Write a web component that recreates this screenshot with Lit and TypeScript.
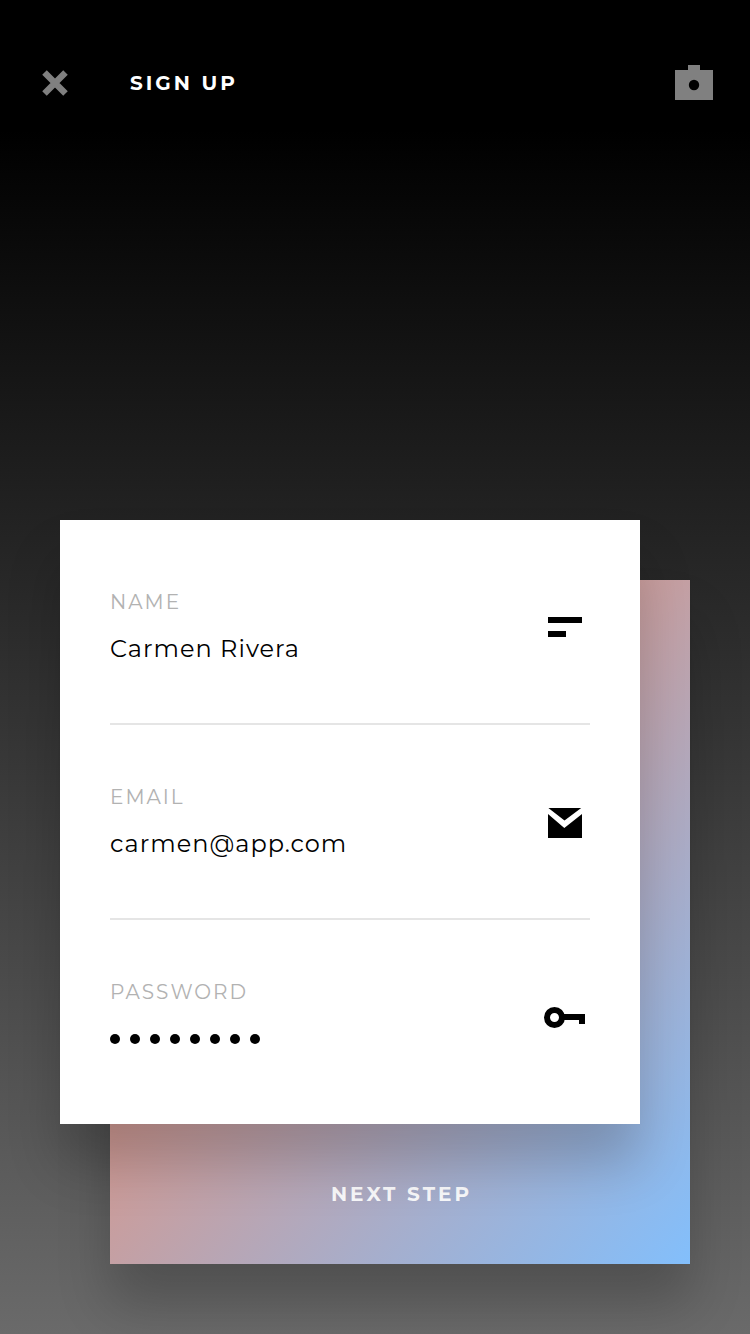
import { LitElement, html, css } from "lit";
import { customElement } from "lit/decorators.js";

const closeIcon = html`<svg width="26" height="26" viewBox="0 0 26 26">
  <path d="M2.5 2.5L23.5 23.5M23.5 2.5L2.5 23.5" stroke="#808080" stroke-width="6.4" fill="none" />
</svg>`;

const cameraIcon = html`<svg width="38" height="36" viewBox="0 0 38 36">
  <path fill="#808080" d="M0 5H13V0H25V5H38V35H0Z" />
  <circle cx="19" cy="20" r="5.2" fill="#000" />
</svg>`;

const linesIcon = html`<svg width="34" height="20" viewBox="0 0 34 20">
  <path d="M0 0H34V6H0ZM0 14H18V20H0Z" />
</svg>`;

const mailIcon = html`<svg width="34" height="30" viewBox="0 0 34 30">
  <path d="M0.4 0H33.2L16.5 12.6ZM0 6L16.3 20L34 6V30H0Z" />
</svg>`;

const keyIcon = html`<svg width="42" height="22" viewBox="0 0 42 22">
  <circle cx="10.5" cy="10.5" r="7.5" fill="none" stroke="#000" stroke-width="6" />
  <path d="M19 7H41V17H35V13H19Z" />
</svg>`;

@customElement("app-root")
export class AppRoot extends LitElement {
  static styles = css`
    :host {
      display: block;
      font-family: "Montserrat", Inter, sans-serif;
    }
    .screen {
      box-sizing: border-box;
      height: 1334px;
      overflow: hidden;
      background: linear-gradient(#000 0, #000 130px, #6a6a6a 1334px);
    }
    svg {
      display: block;
    }
    header {
      display: flex;
      align-items: center;
      height: 166px;
      padding: 0 37px 0 42px;
    }
    h1 {
      flex: 1;
      margin: 0 0 0 62px;
      font-size: 20px;
      line-height: 24px;
      font-weight: 700;
      letter-spacing: 3px;
      color: #fff;
    }
    .stack {
      display: grid;
      width: 630px;
      margin: 354px 0 0 60px;
    }
    .next,
    .form {
      grid-area: 1 / 1;
      box-shadow: 0 40px 50px rgba(0, 0, 0, 0.2);
    }
    .next {
      display: flex;
      align-items: flex-end;
      justify-content: center;
      box-sizing: border-box;
      width: 580px;
      height: 684px;
      margin: 60px 0 0 50px;
      padding: 0 0 58px 3px;
      border: 0;
      font: 700 20px/24px "Montserrat", Inter, sans-serif;
      letter-spacing: 3px;
      color: rgba(255, 255, 255, 0.95);
      background: linear-gradient(to bottom right, #ff8050 0%, #c4a0a4 50%, #a4afcf 74%, #80c0ff 102%);
    }
    .form {
      box-sizing: border-box;
      width: 580px;
      height: 604px;
      padding: 10px 50px;
      background: #fff;
    }
    .field {
      display: flex;
      align-items: center;
      justify-content: space-between;
      box-sizing: border-box;
      height: 195px;
      border-bottom: 2px solid #e5e5e5;
    }
    .field:last-child {
      border-bottom-color: transparent;
    }
    .text {
      padding-top: 0.5px;
    }
    .label {
      font-size: 20px;
      line-height: 24px;
      font-weight: 400;
      letter-spacing: 2px;
      color: #b2b2b2;
    }
    .value {
      margin-top: 19.5px;
      font-size: 24px;
      line-height: 30px;
      letter-spacing: 1.02px;
      color: #000;
    }
    .dots {
      display: flex;
      align-items: center;
      gap: 10px;
      height: 30px;
    }
    .dot {
      width: 10px;
      height: 10px;
      border-radius: 50%;
      background: #000;
    }
    .icon {
      display: flex;
      justify-content: center;
      width: 50px;
    }
    .lowered {
      padding-top: 3px;
    }
  `;

  render() {
    return html`<div class="screen">
      <header>
        ${closeIcon}
        <h1>SIGN UP</h1>
        ${cameraIcon}
      </header>
      <main class="stack">
        <button class="next"><span>NEXT STEP</span></button>
        <section class="form">
          <div class="field">
            <div class="text">
              <div class="label">NAME</div>
              <div class="value">Carmen Rivera</div>
            </div>
            <div class="icon">${linesIcon}</div>
          </div>
          <div class="field">
            <div class="text">
              <div class="label">EMAIL</div>
              <div class="value">carmen@app.com</div>
            </div>
            <div class="icon lowered">${mailIcon}</div>
          </div>
          <div class="field">
            <div class="text">
              <div class="label">PASSWORD</div>
              <div class="value dots">${Array.from({ length: 8 }, () => html`<span class="dot"></span>`)}</div>
            </div>
            <div class="icon lowered">${keyIcon}</div>
          </div>
        </section>
      </main>
    </div>`;
  }
}
